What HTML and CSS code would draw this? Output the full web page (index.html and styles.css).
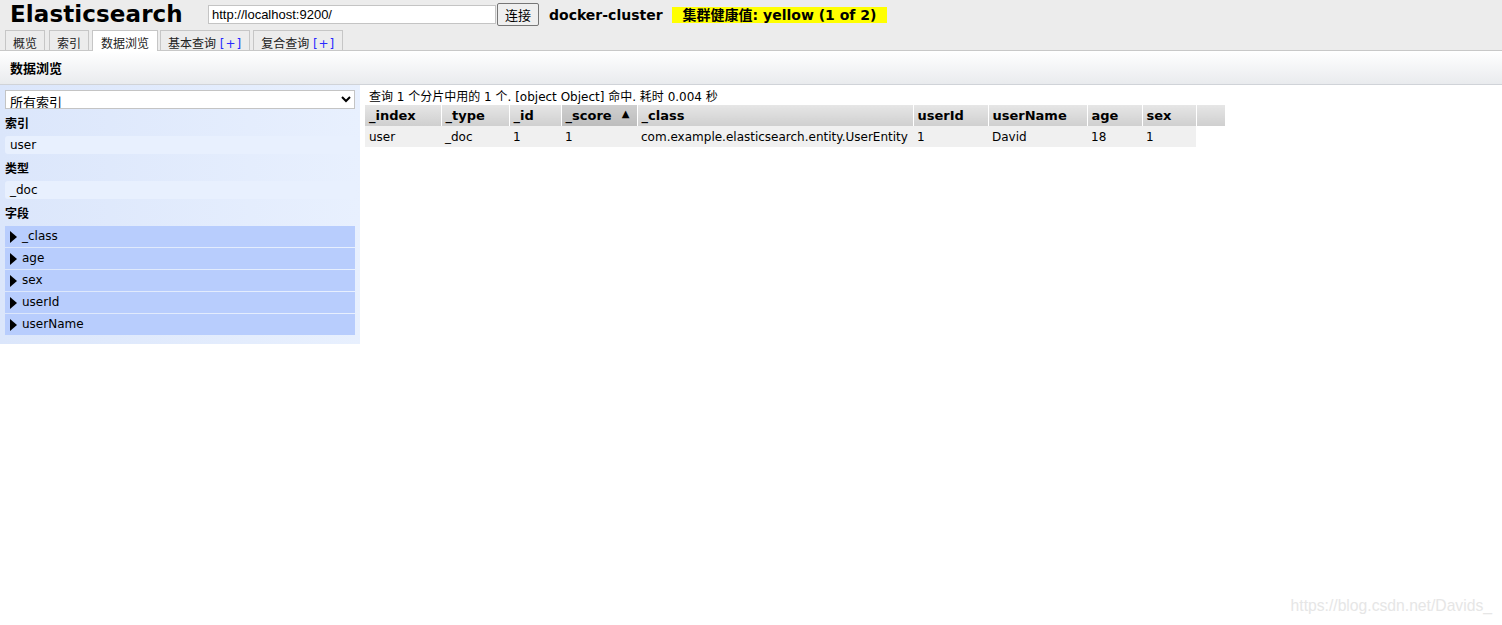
FILE: index.html
```html
<!DOCTYPE html>
<html>
<head>
<meta charset="utf-8">
<link rel="stylesheet" href="styles.css">
</head>
<body>
<div class="header">
  <div class="topbar">
    <h1 class="logo">Elasticsearch</h1>
    <input class="url" type="text" value="http://localhost:9200/">
    <button class="connect">连接</button>
    <span class="cluster">docker-cluster</span>
    <span class="health">集群健康值: yellow (1 of 2)</span>
  </div>
  <div class="tabs">
    <div class="tab">概览</div>
    <div class="tab">索引</div>
    <div class="tab active">数据浏览</div>
    <div class="tab">基本查询 <span class="plus">[+]</span></div>
    <div class="tab">复合查询 <span class="plus">[+]</span></div>
  </div>
</div>
<div class="section-title">数据浏览</div>
<div class="main">
  <div class="sidebar">
    <select class="idx-select"><option>所有索引</option></select>
    <div class="group-title">索引</div>
    <div class="item">user</div>
    <div class="group-title">类型</div>
    <div class="item">_doc</div>
    <div class="group-title">字段</div>
    <div class="fields">
      <div class="field"><span class="tri"></span>_class</div>
      <div class="field"><span class="tri"></span>age</div>
      <div class="field"><span class="tri"></span>sex</div>
      <div class="field"><span class="tri"></span>userId</div>
      <div class="field"><span class="tri"></span>userName</div>
    </div>
  </div>
  <div class="results">
    <div class="summary">查询 1 个分片中用的 1 个. [object Object] 命中. 耗时 0.004 秒</div>
    <table class="grid">
      <thead>
        <tr>
          <th class="c-index">_index</th>
          <th class="c-type">_type</th>
          <th class="c-id">_id</th>
          <th class="c-score sorted">_score <span class="arrow">▲</span></th>
          <th class="c-class">_class</th>
          <th class="c-userid">userId</th>
          <th class="c-username">userName</th>
          <th class="c-age">age</th>
          <th class="c-sex">sex</th>
          <th class="c-extra"></th>
        </tr>
      </thead>
      <tbody>
        <tr>
          <td>user</td>
          <td>_doc</td>
          <td>1</td>
          <td>1</td>
          <td>com.example.elasticsearch.entity.UserEntity</td>
          <td>1</td>
          <td>David</td>
          <td>18</td>
          <td>1</td>
          <td class="blank"></td>
        </tr>
      </tbody>
    </table>
  </div>
</div>
<div class="watermark">https://blog.csdn.net/Davids_</div>
</body>
</html>
```
FILE: styles.css
```css
html, body {
  margin: 0;
  padding: 0;
  background: #fff;
  font-family: "DejaVu Sans", Verdana, "Noto Sans CJK SC", sans-serif;
  font-size: 12px;
  color: #000;
  height: 625px;
  overflow: hidden;
  position: relative;
}

.header {
  background: #ececec;
  height: 50px;
  border-bottom: 1px solid #c8c8c8;
  display: flex;
  flex-direction: column;
}

.topbar {
  display: flex;
  align-items: center;
  height: 29px;
}

.logo {
  margin: 0 0 0 10px;
  font-family: "DejaVu Sans", Verdana, sans-serif;
  font-size: 23px;
  font-weight: bold;
  letter-spacing: 0.1px;
  width: 198px;
  line-height: 29px;
}

.url {
  box-sizing: border-box;
  width: 288px;
  height: 19px;
  margin: 0;
  border: 1px solid #c4c4c4;
  padding: 0 3px;
  font-family: "Liberation Sans", Arial, sans-serif;
  font-size: 13px;
  background: #fff;
}

.connect {
  box-sizing: border-box;
  height: 23px;
  width: 42px;
  margin: 0 0 0 1px;
  padding: 0;
  border: 1px solid #767676;
  border-radius: 2px;
  background: #efefef;
  font-family: "Noto Sans CJK SC", sans-serif;
  font-size: 13px;
}

.cluster {
  margin-left: 10px;
  font-weight: bold;
  font-size: 14px;
}

.health {
  margin-left: 9px;
  background: #ffff00;
  font-weight: bold;
  font-size: 14px;
  font-family: "DejaVu Sans", "Noto Sans CJK SC", sans-serif;
  padding: 0 11px 0 11px;
  height: 16px;
  line-height: 16px;
}

.tabs {
  display: flex;
  align-items: flex-end;
  padding-left: 5px;
  margin-top: 1px;
  height: 20px;
}

.tab {
  box-sizing: border-box;
  height: 20px;
  border: 1px solid #c6c6c6;
  border-bottom: none;
  background: #ececec;
  padding: 0 7px;
  margin-right: 4px;
  font-family: "Noto Sans CJK SC", sans-serif;
  font-size: 12px;
  line-height: 24px;
  color: #222;
  white-space: nowrap;
}

.tab:nth-child(2) { margin-right: 3px; }
.tab:nth-child(3) { margin-right: 2px; padding: 0 8px; }
.tab:nth-child(4) { margin-right: 3px; }

.tab.active {
  background: #fff;
  height: 21px;
  margin-bottom: -1px;
  position: relative;
}

.plus {
  font-family: "DejaVu Sans", Verdana, sans-serif;
  color: #2a2aff;
  margin-left: 1px;
  letter-spacing: 1px;
}

.section-title {
  height: 33px;
  line-height: 34px;
  padding-left: 10px;
  font-weight: bold;
  font-size: 13px;
  font-family: "Noto Sans CJK SC", sans-serif;
  background: linear-gradient(#ffffff, #e9ebee);
  border-bottom: 1px solid #d0d3d8;
}

.main {
  display: flex;
  align-items: flex-start;
}

.sidebar {
  width: 360px;
  box-sizing: border-box;
  padding: 5px 5px 9px 5px;
  background: linear-gradient(to right, #dbe6fb, #e8f0fe);
}

.idx-select {
  display: block;
  width: 350px;
  height: 19px;
  box-sizing: border-box;
  border: 1px solid #c4c4c4;
  background: #fff;
  font-family: "Noto Sans CJK SC", sans-serif;
  font-size: 13px;
  padding: 0;
  margin: 0;
}

.group-title {
  font-weight: bold;
  font-family: "Noto Sans CJK SC", sans-serif;
  font-size: 12px;
  height: 27px;
  line-height: 28px;
}

.item {
  height: 18px;
  line-height: 18px;
  background: #e8f0fe;
  border-radius: 3px;
  padding-left: 5px;
  font-size: 12px;
}

.fields {
  display: flex;
  flex-direction: column;
  gap: 1px;
}

.field {
  height: 21px;
  line-height: 21px;
  background: #b8cdfd;
  display: flex;
  align-items: center;
  font-size: 12px;
}

.tri {
  width: 0;
  height: 0;
  border-top: 6px solid transparent;
  border-bottom: 6px solid transparent;
  border-left: 7px solid #000;
  margin: 0 5px 0 5px;
}

.results {
  padding-left: 5px;
}

.summary {
  font-family: "DejaVu Sans", "Noto Sans CJK SC", sans-serif;
  font-size: 12px;
  height: 20px;
  line-height: 24px;
  padding-left: 4px;
}

.grid {
  border-collapse: collapse;
  border-spacing: 0;
  table-layout: fixed;
}

.grid th {
  box-sizing: border-box;
  height: 21px;
  padding: 0 4px;
  text-align: left;
  font-size: 13px;
  font-weight: bold;
  background: linear-gradient(#e6e6e6, #cfcfcf);
  border-right: 1px solid #fff;
  white-space: nowrap;
}

.grid th.sorted {
  background: linear-gradient(#cfcfcf, #bdbdbd);
}

.arrow {
  float: right;
  font-size: 10px;
  margin-right: 3px;
}

.grid td {
  height: 21px;
  padding: 0 4px;
  background: #f0f0f0;
  white-space: nowrap;
  font-size: 12px;
}

.grid td.blank {
  background: #fff;
}

.c-index { width: 76px; }
.c-type { width: 68px; }
.c-id { width: 52px; }
.c-score { width: 76px; }
.c-class { width: 276px; }
.c-userid { width: 75px; }
.c-username { width: 99px; }
.c-age { width: 55px; }
.c-sex { width: 54px; }
.c-extra { width: 29px; }

.watermark {
  position: absolute;
  right: 10px;
  top: 597px;
  font-family: "Liberation Sans", Arial, sans-serif;
  font-size: 15.7px;
  color: #e6e6e6;
}
```
